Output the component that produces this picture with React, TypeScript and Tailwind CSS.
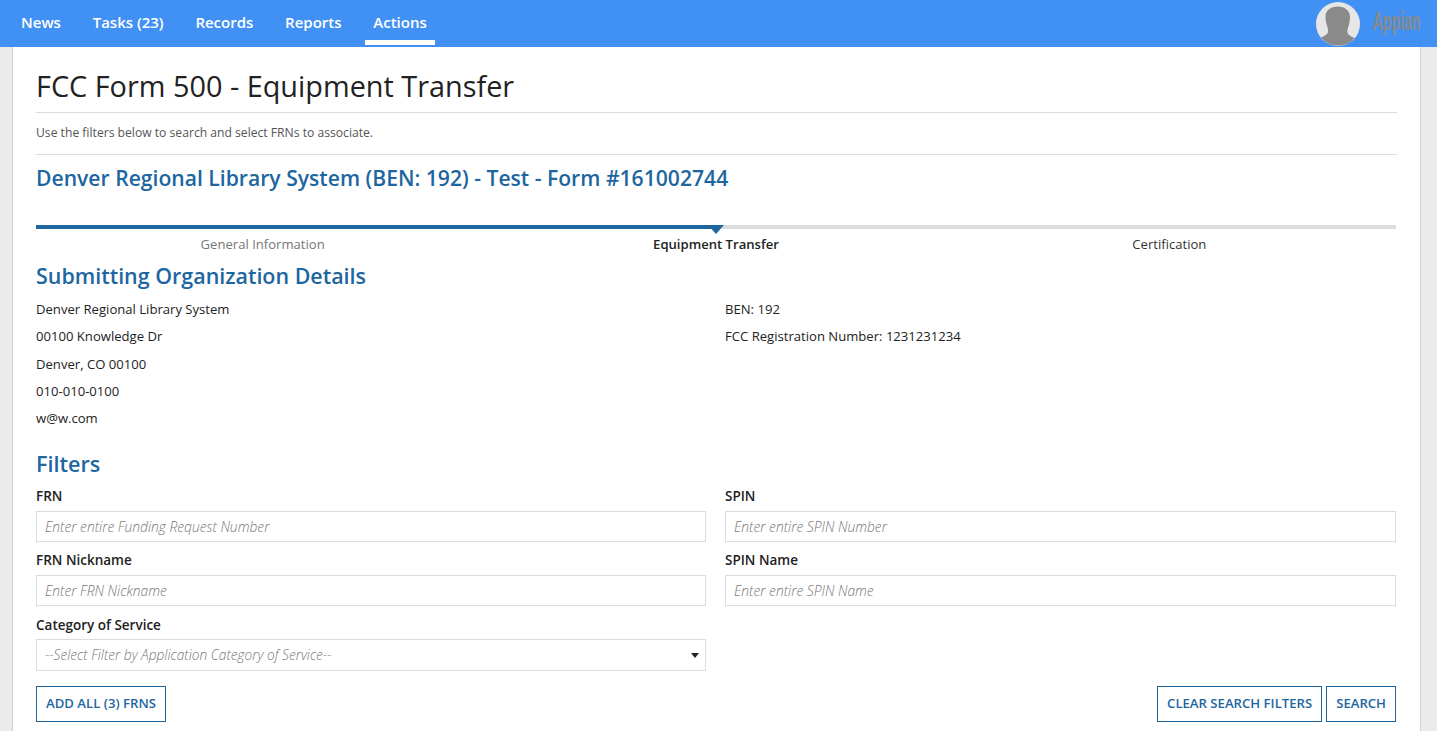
const navItems = ["News", "Tasks (23)", "Records", "Reports", "Actions"];

function Field({ label, placeholder }: { label: string; placeholder: string }) {
  return (
    <div>
      <div className="h-[24px] text-[13.5px] leading-[18px] font-semibold text-[#222]">{label}</div>
      <input
        readOnly
        placeholder={placeholder}
        className="block w-full h-[31px] border border-[#dcdcdc] px-2 pb-px text-[13.8px] font-light italic text-[#333] placeholder:text-[#777] outline-none"
      />
    </div>
  );
}

function OutlineButton({ children }: { children: string }) {
  return (
    <button className="h-[36px] px-[9px] pb-px border border-[#1d669f] bg-white text-[13.15px] font-semibold text-[#1d669f]">
      {children}
    </button>
  );
}

export default function App() {
  return (
    <div className="h-[731px] overflow-hidden bg-[#ebebeb] font-['Open_Sans',sans-serif]">
      {/* Top nav */}
      <header className="h-[47px] bg-[#4191f5] flex items-center justify-between">
        <nav className="flex h-full pl-[13px] gap-[15.75px]">
          {navItems.map((item) => (
            <a
              key={item}
              className={
                "h-[45px] px-2 flex items-center pt-[4px] text-[15px] font-semibold text-white border-b-[5px] " +
                (item === "Actions" ? "border-white" : "border-transparent")
              }
            >
              {item}
            </a>
          ))}
        </nav>
        <div className="flex items-center pr-[16px]">
          <svg width="44" height="44" viewBox="0 0 44 44" className="mt-[1px]">
            <circle cx="22" cy="22" r="22" fill="#e6e6e6" />
            <path
              d="M22 4.500c-7.500 0-12.500 4-12.500 10 0 4 1 8 2 11 .8 2.500 1 5-.5 6.500-1.500 1.500-4 2.500-6 3.500C9.800 41.300 15.500 43.500 22 43.500s12.200-2.200 16.500-7.500c-2-1-4.500-2-6-3.500-1.500-1.500-1.300-4-.5-6.500 1-3 2-7 2-11 0-6-5-10.500-12-10.500z"
              fill="#8a8a8a"
            />
          </svg>
          <span className="ml-[13px] mb-[5px] w-[48px] text-[25px] leading-none font-bold font-['Liberation_Sans',sans-serif] text-[#8a8a8a] scale-x-[0.56] origin-left whitespace-nowrap">
            Appian
          </span>
        </div>
      </header>

      {/* Page card */}
      <main className="ml-[12px] mr-[16px] h-[684px] bg-white border-x border-[#cfcfcf] pl-[23px] pr-[23px]">
        <h1 className="h-[66px] pt-[19px] text-[28.85px] leading-[40px] font-medium text-[#222] border-b border-[#dcdcdc]">
          FCC Form 500 - Equipment Transfer
        </h1>
        <p className="h-[42px] border-b border-[#dcdcdc] text-[12.15px] leading-[39px] text-[#555]">
          Use the filters below to search and select FRNs to associate.
        </p>
        <h2 className="mt-[8px] h-[50px] text-[21.13px] leading-[30px] font-semibold text-[#1d669f]">
          Denver Regional Library System (BEN: 192) - Test - Form #161002744
        </h2>

        {/* Steps */}
        <div className="mr-px">
          <div className="relative h-[4px] mt-[12px] bg-[#dcdcdc]">
            <div className="h-full w-[680px] bg-[#1d669f]" />
            <div className="absolute left-[672px] top-0 w-0 h-0 border-x-[8px] border-x-transparent border-t-[9px] border-t-[#1d669f]" />
          </div>
          <div className="grid grid-cols-3 h-[26px] pt-[6px] text-[13.1px] leading-[18px] text-center">
            <span className="text-[#777]">General Information</span>
            <span className="font-semibold text-[#222]">Equipment Transfer</span>
            <span className="text-[#333]">Certification</span>
          </div>

          <h3 className="mt-[6px] h-[35px] text-[21.45px] leading-[30px] font-semibold text-[#1d669f]">
            Submitting Organization Details
          </h3>
          <div className="grid grid-cols-[670px_1fr] gap-x-[19px] text-[13.1px] leading-[27.3px] text-[#222]">
            <div>
              <div>Denver Regional Library System</div>
              <div>00100 Knowledge Dr</div>
              <div>Denver, CO 00100</div>
              <div>010-010-0100</div>
              <div>w@w.com</div>
            </div>
            <div>
              <div>BEN: 192</div>
              <div>FCC Registration Number: 1231231234</div>
            </div>
          </div>

          <h3 className="mt-[17px] h-[38px] text-[21.6px] leading-[30px] font-semibold text-[#1d669f]">Filters</h3>
          <div className="grid grid-cols-[670px_1fr] gap-x-[19px] gap-y-[9px]">
            <Field label="FRN" placeholder="Enter entire Funding Request Number" />
            <Field label="SPIN" placeholder="Enter entire SPIN Number" />
            <Field label="FRN Nickname" placeholder="Enter FRN Nickname" />
            <Field label="SPIN Name" placeholder="Enter entire SPIN Name" />
            <div>
              <div className="h-[24px] text-[13.5px] leading-[20px] font-semibold text-[#222]">Category of Service</div>
              <div className="relative h-[32px] border border-[#dcdcdc] px-2 text-[13.7px] leading-[30px] font-light italic text-[#777]">
                --Select Filter by Application Category of Service--
                <div className="absolute right-[6px] top-[13px] w-0 h-0 border-x-[4px] border-x-transparent border-t-[5px] border-t-[#222]" />
              </div>
            </div>
          </div>

          <div className="mt-[15px] flex justify-between">
            <OutlineButton>ADD ALL (3) FRNS</OutlineButton>
            <div className="flex gap-[4px]">
              <OutlineButton>CLEAR SEARCH FILTERS</OutlineButton>
              <OutlineButton>SEARCH</OutlineButton>
            </div>
          </div>
        </div>
      </main>
    </div>
  );
}
